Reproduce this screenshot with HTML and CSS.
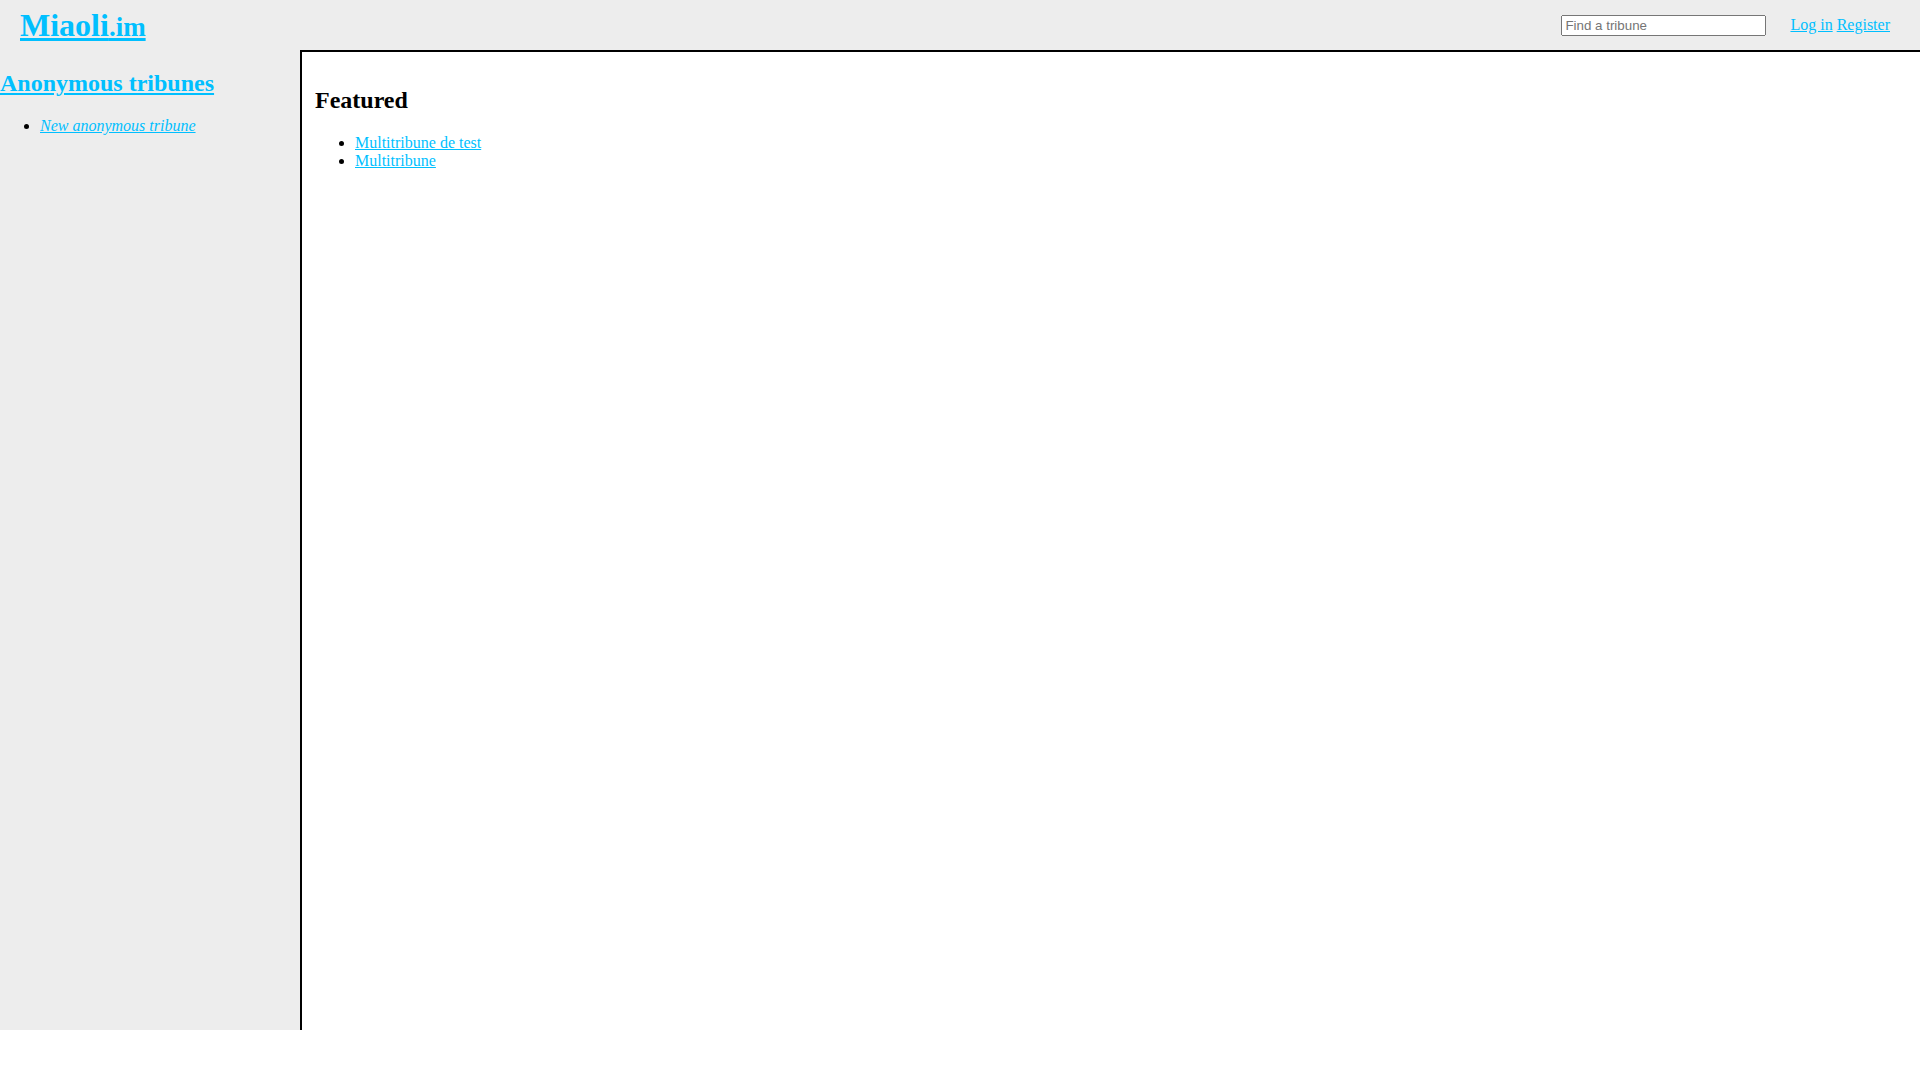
FILE: index.html
```html
<!DOCTYPE html>
<html lang="en">
<head>
<meta charset="utf-8">
<title>Miaoli.im</title>
<link rel="stylesheet" href="styles.css">
</head>
<body>
<div class="page">
  <header class="topbar">
    <h1 class="logo"><a href="#">Miaoli<span class="logo-tld">.im</span></a></h1>
    <div class="topbar-right">
      <form class="search"><input class="search-input" type="text" placeholder="Find a tribune"></form>
      <nav class="account"><a href="#">Log in</a> <a href="#">Register</a></nav>
    </div>
  </header>
  <div class="layout">
    <aside class="sidebar">
      <h2 class="side-title"><a href="#">Anonymous tribunes</a></h2>
      <ul class="side-list">
        <li><a class="new-link" href="#">New anonymous tribune</a></li>
      </ul>
    </aside>
    <main class="content">
      <h2 class="content-title">Featured</h2>
      <ul class="featured-list">
        <li><a href="#">Multitribune de test</a></li>
        <li><a href="#">Multitribune</a></li>
      </ul>
    </main>
  </div>
</div>
</body>
</html>
```
FILE: styles.css
```css
html, body {
  margin: 0;
  padding: 0;
  background: #ffffff;
}

body {
  font-family: "Liberation Serif", "Times New Roman", serif;
  font-size: 16px;
  color: #000000;
}

a {
  color: #00bfff;
}

.page {
  background: #ededed;
}

.topbar {
  height: 50px;
  display: flex;
  align-items: center;
  justify-content: space-between;
}

.logo {
  margin: 0 0 0 20px;
  font-size: 32px;
  font-weight: bold;
}

.logo-tld {
  font-size: 27px;
}

.topbar-right {
  display: flex;
  align-items: center;
  margin-right: 30px;
}

.search {
  margin: 0;
}

.search-input {
  width: 205px;
  box-sizing: border-box;
  font-family: "Liberation Sans", Arial, sans-serif;
  font-size: 13.33px;
  margin: 0;
  display: block;
}

.account {
  margin-left: 24px;
}

.layout {
  display: flex;
  height: calc(100vh - 100px);
}

.sidebar {
  width: 300px;
  flex: none;
}

.side-title {
  font-size: 24px;
  margin: 20px 0;
}

.side-list {
  margin: 16px 0;
  padding-left: 40px;
}

.new-link {
  font-style: italic;
}

.content {
  flex: 1;
  background: #ffffff;
  border-top: 2px solid #000000;
  border-left: 2px solid #000000;
  padding: 15px 13px;
}

.content-title {
  font-size: 24px;
  margin: 20px 0;
}

.featured-list {
  margin: 16px 0;
  padding-left: 40px;
}
```
